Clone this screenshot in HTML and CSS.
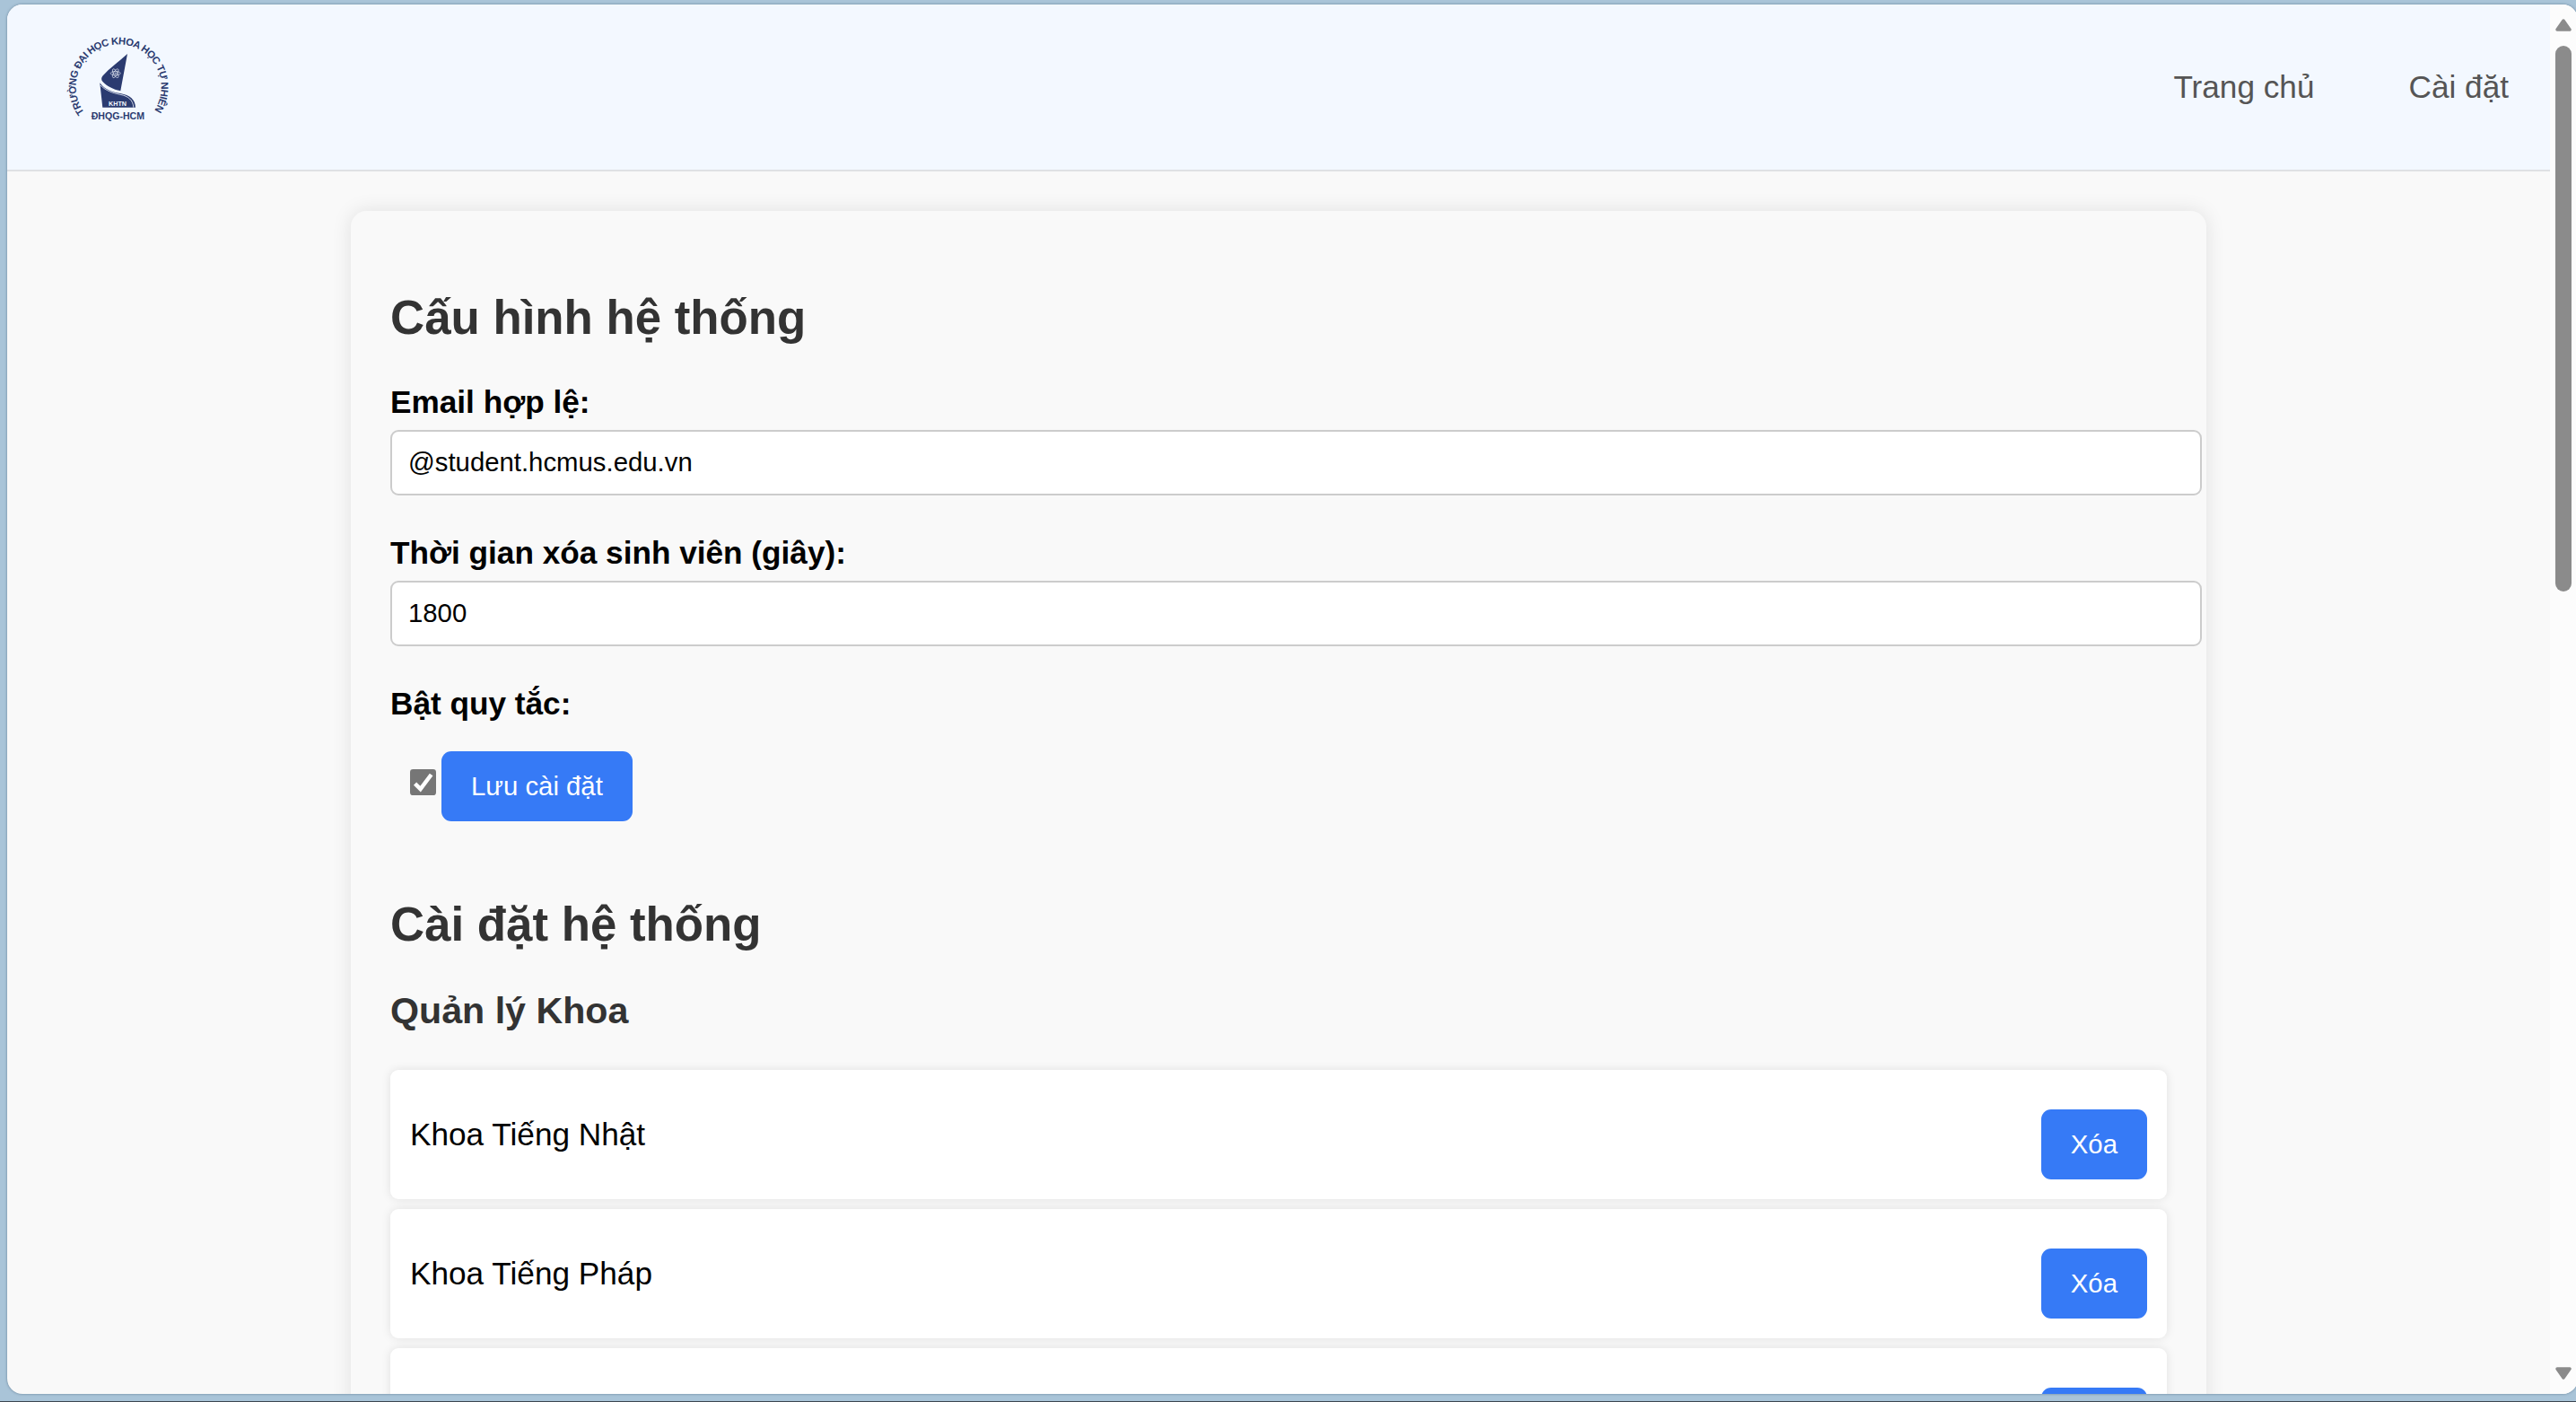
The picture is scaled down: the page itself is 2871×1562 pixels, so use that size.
FILE: index.html
```html
<!DOCTYPE html>
<html lang="vi">
<head>
<meta charset="utf-8">
<title>Cài đặt hệ thống</title>
<link rel="stylesheet" href="styles.css">
</head>
<body>
<div class="window">
  <div class="page">
    <header class="header">
      <svg class="logo" viewBox="0 0 120 110" role="img" aria-label="KHTN">
        <defs><path id="ring" d="M22.100 85.300A47.500 47.500 0 1 1 99.200 84"/></defs>
        <text class="logo-text" font-size="11.300" textLength="207"><textPath href="#ring" textLength="207">TRƯỜNG ĐẠI HỌC KHOA HỌC TỰ NHIÊN</textPath></text>
        <path d="M70 20C60 29 50 36 42.500 44.500C40.800 46.500 40.600 49 42.500 51C47 56 54 59.500 62.300 61.300Z"/>
        <path d="M39.300 52.200C45 60 53 62.500 62 64C73 66 78.800 71 79 79.700H42.300Z"/>
        <path class="stripe" d="M40 55C46 61 53 63.500 62 65.300C71 67 76.300 71.500 76.800 79.700"/>
        <g class="atom" transform="translate(56.700 41.700)">
          <ellipse rx="5.500" ry="2.200"/>
          <ellipse rx="5.500" ry="2.200" transform="rotate(60)"/>
          <ellipse rx="5.500" ry="2.200" transform="rotate(120)"/>
          <circle r="0.800"/>
        </g>
        <text class="logo-khtn" x="49" y="78" font-size="6.500" textLength="20" lengthAdjust="spacingAndGlyphs">KHTN</text>
        <text class="logo-text" x="29.700" y="93" font-size="10.800" textLength="59.300" lengthAdjust="spacingAndGlyphs">ĐHQG-HCM</text>
      </svg>
      <nav class="nav">
        <a class="nav-link">Trang chủ</a>
        <a class="nav-link">Cài đặt</a>
      </nav>
    </header>
    <main class="container">
      <h2 class="title">Cấu hình hệ thống</h2>
      <form class="form">
        <label class="label" for="email">Email hợp lệ:</label>
        <input class="input" id="email" type="text" value="@student.hcmus.edu.vn">
        <label class="label" for="time">Thời gian xóa sinh viên (giây):</label>
        <input class="input" id="time" type="text" value="1800">
        <label class="label">Bật quy tắc:</label>
        <div class="actions">
          <svg class="checkbox" viewBox="0 0 13 13"><rect width="13" height="13" rx="1.500"/><path d="M2.500 7.200L5.200 9.900L10.600 2.700"/></svg>
          <button class="button" type="button">Lưu cài đặt</button>
        </div>
      </form>
      <h2 class="title title-second">Cài đặt hệ thống</h2>
      <h3 class="subtitle">Quản lý Khoa</h3>
      <ul class="list">
        <li class="item"><span>Khoa Tiếng Nhật</span><button class="button" type="button">Xóa</button></li>
        <li class="item"><span>Khoa Tiếng Pháp</span><button class="button" type="button">Xóa</button></li>
        <li class="item"><span></span><button class="button" type="button"></button></li>
      </ul>
    </main>
  </div>
  <div class="scrollbar">
    <svg class="arrow" viewBox="0 0 18 14"><path d="M9 2L16 12H2Z"/></svg>
    <div class="thumb"></div>
    <svg class="arrow arrow-down" viewBox="0 0 18 14"><path d="M9 12L16 2H2Z"/></svg>
  </div>
</div>
</body>
</html>
```
FILE: styles.css
```css
* {
  box-sizing: border-box;
}

body {
  margin: 0;
  width: 2871px;
  height: 1562px;
  padding: 5px 0 8px 8px;
  overflow: hidden;
  background: #a9c4d8;
  border-bottom: 1px solid #3c4650;
  font-family: "Liberation Sans", Arial, sans-serif;
  font-size: 35.2px;
  line-height: 40px;
  color: #000;
}

.window {
  display: flex;
  width: 2865px;
  height: 1548px;
  border-radius: 17px;
  overflow: hidden;
  background: #f9f9f9;
  box-shadow: 0 0 3px rgba(40, 70, 95, 0.55);
}

.page {
  width: 2834px;
  height: 1548px;
  overflow: hidden;
}

.header {
  display: flex;
  justify-content: space-between;
  align-items: flex-start;
  height: 186px;
  padding: 22px 46px 0 64px;
  background: #f3f8ff;
  border-bottom: 2px solid #dfe1e4;
}

.logo {
  width: 120px;
  height: 110px;
  margin-top: 13px;
  fill: #2b3b70;
}

.logo-text,
.logo-khtn {
  font-family: "Liberation Sans", Arial, sans-serif;
  font-weight: 700;
}

.logo-khtn {
  fill: #f3f8ff;
}

.stripe {
  fill: none;
  stroke: #f3f8ff;
  stroke-width: 0.8;
}

.atom {
  fill: none;
  stroke: #f3f8ff;
  stroke-width: 0.6;
}

.nav {
  display: flex;
  gap: 105px;
  margin-top: 50px;
}

.nav-link {
  color: #555;
}

.container {
  width: 2068px;
  height: 1500px;
  margin: 44px 0 0 383px;
  padding: 44px;
  border-radius: 17.6px;
  background: #f9f9f9;
  box-shadow: 0 0 22px rgba(0, 0, 0, 0.1);
}

.title {
  margin: 45px 0 44px;
  font-size: 52.8px;
  line-height: 60px;
  color: #333;
}

.form {
  display: flex;
  flex-direction: column;
}

.label {
  font-weight: 700;
  margin-bottom: 11px;
}

.input {
  width: 2019px;
  height: 73px;
  margin: 0 0 44px;
  padding: 0 18px 2px;
  border: 2px solid #ccc;
  border-radius: 9px;
  background: #fff;
  color: #000;
  font: 29.33px "Liberation Sans", Arial, sans-serif;
}

.actions {
  display: flex;
  gap: 6px;
  padding: 22px 0 0 22px;
}

.checkbox {
  width: 29px;
  height: 29px;
  margin-top: 20px;
  fill: #767676;
}

.checkbox path {
  fill: none;
  stroke: #fff;
  stroke-width: 2;
}

.button {
  height: 78px;
  min-width: 118px;
  padding: 0 33px;
  border: 0;
  border-radius: 11px;
  background: #367af6;
  color: #fff;
  font: 29.33px "Liberation Sans", Arial, sans-serif;
}

.title-second {
  margin: 85px 0 43px;
}

.subtitle {
  margin: 0 0 43px;
  font-size: 41.18px;
  line-height: 46px;
  color: #333;
}

.list {
  display: flex;
  flex-direction: column;
  gap: 11px;
  margin: 0;
  padding: 0;
  list-style: none;
}

.item {
  display: flex;
  justify-content: space-between;
  align-items: center;
  height: 144px;
  padding: 0 22px;
  border-radius: 9px;
  background: #fff;
  box-shadow: 0 0 11px rgba(0, 0, 0, 0.1);
}

.item .button {
  margin-top: 22px;
}

.scrollbar {
  display: flex;
  flex-direction: column;
  width: 31px;
  height: 1548px;
  padding: 16px 0 16px 6px;
  background: #fcfcfc;
}

.arrow {
  width: 18px;
  height: 14px;
  fill: #8b8b8b;
  stroke: #8b8b8b;
  stroke-width: 3.5;
  stroke-linejoin: round;
}

.thumb {
  width: 18px;
  height: 608px;
  margin-top: 16px;
  border-radius: 9px;
  background: #8b8b8b;
}

.arrow-down {
  margin-top: auto;
}
```
